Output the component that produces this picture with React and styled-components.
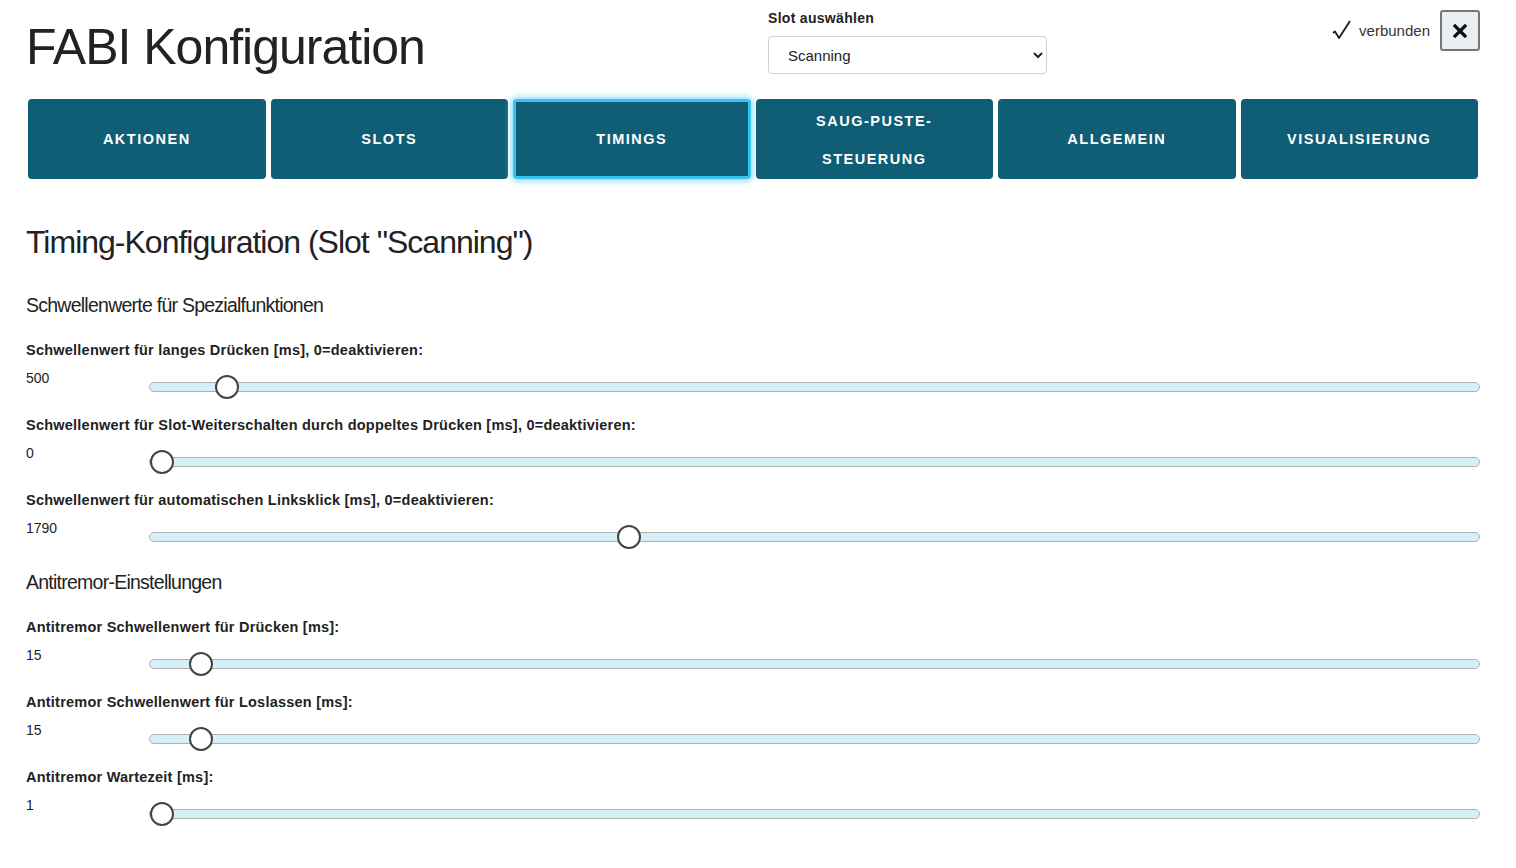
import React, { useState } from 'react';
import styled, { createGlobalStyle } from 'styled-components';

const GlobalStyle = createGlobalStyle`
    html, body {
        margin: 0;
        padding: 0;
        background: #fff;
    }
    body {
        font-family: "Liberation Sans", Arial, sans-serif;
        color: #222;
    }
`;

const Page = styled.div`
    padding: 8px 36px 20px 26px;
`;

const Header = styled.header`
    display: grid;
    grid-template-columns: 742px 279px 1fr;
    align-items: start;
`;

const Title = styled.h1`
    margin: 9px 0 0;
    font-size: 50px;
    font-weight: 400;
    line-height: 60px;
    letter-spacing: -1px;
`;

const SlotPicker = styled.div`
    display: flex;
    flex-direction: column;
`;

const SmallLabel = styled.label`
    font-size: 14px;
    font-weight: 700;
    line-height: 20px;
    letter-spacing: 0.3px;
`;

const Select = styled.select`
    margin-top: 8px;
    height: 38px;
    width: 100%;
    padding: 0 10px 0 15px;
    border: 1px solid #d1d1d1;
    border-radius: 4px;
    background: #fff;
    font-family: inherit;
    font-size: 15px;
    color: #222;
`;

const Status = styled.div`
    display: flex;
    justify-content: flex-end;
    align-items: center;
    gap: 8px;
    margin-top: 2px;
`;

const Connected = styled.span`
    display: flex;
    align-items: center;
    gap: 6px;
    font-size: 15px;
    color: #333;
`;

const CloseButton = styled.button`
    width: 40px;
    height: 41px;
    margin-left: 2px;
    display: flex;
    align-items: center;
    justify-content: center;
    background: #e9eef2;
    border: 2px solid #767676;
    border-radius: 3px;
    padding: 0;
`;

const Tabs = styled.nav`
    display: grid;
    grid-template-columns: repeat(6, 1fr);
    gap: 5px;
    margin: 22px 0 0 2px;
    width: 1450px;
`;

const Tab = styled.button`
    height: 80px;
    padding: 0 20px;
    border-radius: 4px;
    border: ${(props) => props.active ? '3px solid #38c3f2' : '3px solid #0f5e75'};
    box-shadow: ${(props) => props.active ? '0 0 6px 2px #8ddcf7' : 'none'};
    background: #0f5e75;
    color: #fff;
    font-family: inherit;
    font-size: 14.5px;
    font-weight: 700;
    letter-spacing: 1.5px;
    line-height: 38px;
    text-transform: uppercase;
    cursor: pointer;
`;

const PageTitle = styled.h2`
    margin: 43px 0 0;
    font-size: 32px;
    font-weight: 400;
    line-height: 40px;
    letter-spacing: -1px;
`;

const Section = styled.section`
    display: flex;
    flex-direction: column;
`;

const SectionTitle = styled.h4`
    margin: ${(props) => props.first ? '29px' : '19px'} 0 5px;
    font-size: 19.5px;
    font-weight: 400;
    line-height: 28px;
    letter-spacing: -0.75px;
`;

const Field = styled.div`
    margin-top: 16px;
`;

const FieldLabel = styled.label`
    display: block;
    font-size: 14.5px;
    font-weight: 700;
    line-height: 20px;
    letter-spacing: 0.23px;
`;

const SliderRow = styled.div`
    display: grid;
    grid-template-columns: 123px 1fr;
    align-items: start;
    margin-top: 8px;
`;

const Value = styled.span`
    font-size: 14px;
    line-height: 20px;
`;

const Range = styled.input`
    -webkit-appearance: none;
    appearance: none;
    width: 100%;
    height: 24px;
    margin: 7px 0 0;
    background: transparent;

    &::-webkit-slider-runnable-track {
        height: 10px;
        background: #d5f0f7;
        border: 1px solid #b0b0b0;
        border-radius: 5px;
        box-sizing: border-box;
    }

    &::-webkit-slider-thumb {
        -webkit-appearance: none;
        width: 24px;
        height: 24px;
        margin-top: -8px;
        border-radius: 50%;
        background: #fff;
        border: 2px solid #444;
        box-sizing: border-box;
    }
`;

const tabs = [
    { id: 'actions', label: 'Aktionen' },
    { id: 'slots', label: 'Slots' },
    { id: 'timings', label: 'Timings' },
    { id: 'puff', label: <>Saug-Puste-<br />Steuerung</> },
    { id: 'general', label: 'Allgemein' },
    { id: 'vis', label: 'Visualisierung' },
];

const sections = [
    {
        title: 'Schwellenwerte für Spezialfunktionen',
        fields: [
            { label: 'Schwellenwert für langes Drücken [ms], 0=deaktivieren:', value: 500, min: 0, max: 10000 },
            { label: 'Schwellenwert für Slot-Weiterschalten durch doppeltes Drücken [ms], 0=deaktivieren:', value: 0, min: 0, max: 10000 },
            { label: 'Schwellenwert für automatischen Linksklick [ms], 0=deaktivieren:', value: 1790, min: 0, max: 5000 },
        ],
    },
    {
        title: 'Antitremor-Einstellungen',
        fields: [
            { label: 'Antitremor Schwellenwert für Drücken [ms]:', value: 15, min: 0, max: 500 },
            { label: 'Antitremor Schwellenwert für Loslassen [ms]:', value: 15, min: 0, max: 500 },
            { label: 'Antitremor Wartezeit [ms]:', value: 1, min: 1, max: 500 },
        ],
    },
];

const CheckIcon = () => (
    <svg width="22" height="24" viewBox="0 0 22 24">
        <path d="M2 14 L4 12.5 L8 19 L19 2" fill="none" stroke="#1a1a1a" strokeWidth="1.8" strokeLinejoin="round" />
    </svg>
);

const CrossIcon = () => (
    <svg width="14" height="14" viewBox="0 0 14 14">
        <path d="M2 2 L12 12 M12 2 L2 12" stroke="#111" strokeWidth="3.2" strokeLinecap="square" />
    </svg>
);

const Slider = ({ field }) => {
    const [value, setValue] = useState(field.value);
    return (
        <Field>
            <FieldLabel>{field.label}</FieldLabel>
            <SliderRow>
                <Value>{value}</Value>
                <Range
                    type="range"
                    min={field.min}
                    max={field.max}
                    value={value}
                    onChange={(e) => setValue(Number(e.target.value))}
                />
            </SliderRow>
        </Field>
    );
};

export default function App() {
    const [activeTab, setActiveTab] = useState('timings');

    return (
        <Page>
            <GlobalStyle />
            <Header>
                <Title>FABI Konfiguration</Title>
                <SlotPicker>
                    <SmallLabel>Slot auswählen</SmallLabel>
                    <Select defaultValue="Scanning">
                        <option>Scanning</option>
                        <option>Mouse</option>
                    </Select>
                </SlotPicker>
                <Status>
                    <Connected>
                        <CheckIcon />
                        verbunden
                    </Connected>
                    <CloseButton title="Verbindung trennen"><CrossIcon /></CloseButton>
                </Status>
            </Header>

            <Tabs>
                {tabs.map(tab => (
                    <Tab key={tab.id} active={tab.id === activeTab} onClick={() => setActiveTab(tab.id)}>
                        {tab.label}
                    </Tab>
                ))}
            </Tabs>

            <PageTitle>Timing-Konfiguration (Slot "Scanning")</PageTitle>

            {sections.map((section, i) => (
                <Section key={section.title}>
                    <SectionTitle first={i === 0}>{section.title}</SectionTitle>
                    {section.fields.map(field => <Slider key={field.label} field={field} />)}
                </Section>
            ))}
        </Page>
    );
}
